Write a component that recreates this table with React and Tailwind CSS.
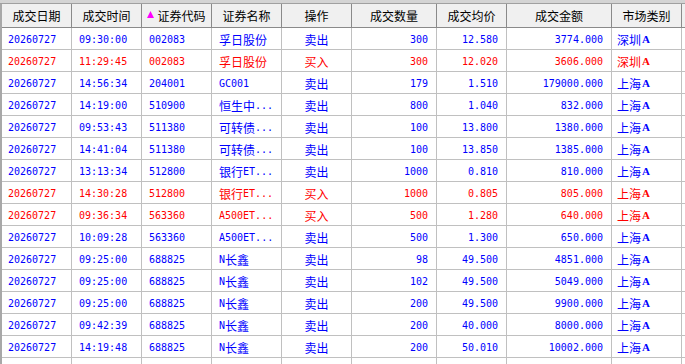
const cols = 'grid grid-cols-[70px_70px_70px_70px_70px_85px_70px_105px_70px]';

const rows = [
  ['20260727', '09:30:00', '002083', '孚日股份', '卖出', '300', '12.580', '3774.000', '深圳', 'b'],
  ['20260727', '11:29:45', '002083', '孚日股份', '买入', '300', '12.020', '3606.000', '深圳', 'r'],
  ['20260727', '14:56:34', '204001', 'GC001', '卖出', '179', '1.510', '179000.000', '上海', 'b'],
  ['20260727', '14:19:00', '510900', '恒生中...', '卖出', '800', '1.040', '832.000', '上海', 'b'],
  ['20260727', '09:53:43', '511380', '可转债...', '卖出', '100', '13.800', '1380.000', '上海', 'b'],
  ['20260727', '14:41:04', '511380', '可转债...', '卖出', '100', '13.850', '1385.000', '上海', 'b'],
  ['20260727', '13:13:34', '512800', '银行ET...', '卖出', '1000', '0.810', '810.000', '上海', 'b'],
  ['20260727', '14:30:28', '512800', '银行ET...', '买入', '1000', '0.805', '805.000', '上海', 'r'],
  ['20260727', '09:36:34', '563360', 'A500ET...', '买入', '500', '1.280', '640.000', '上海', 'r'],
  ['20260727', '10:09:28', '563360', 'A500ET...', '卖出', '500', '1.300', '650.000', '上海', 'b'],
  ['20260727', '09:25:00', '688825', 'N长鑫', '卖出', '98', '49.500', '4851.000', '上海', 'b'],
  ['20260727', '09:25:00', '688825', 'N长鑫', '卖出', '102', '49.500', '5049.000', '上海', 'b'],
  ['20260727', '09:25:00', '688825', 'N长鑫', '卖出', '200', '49.500', '9900.000', '上海', 'b'],
  ['20260727', '09:42:39', '688825', 'N长鑫', '卖出', '200', '40.000', '8000.000', '上海', 'b'],
  ['20260727', '14:19:48', '688825', 'N长鑫', '卖出', '200', '50.010', '10002.000', '上海', 'b'],
];

const headers = ['成交日期', '成交时间', '证券代码', '证券名称', '操作', '成交数量', '成交均价', '成交金额', '市场类别'];

const cjk = "font-['Noto_Sans_CJK_SC',sans-serif] text-[12px]";
const mono = "font-['DejaVu_Sans_Mono',monospace] text-[10px]";

function Mixed({ s }) {
  return s
    .split(/([\u4e00-\u9fff]+)/)
    .filter(Boolean)
    .map((p, i) =>
      /[\u4e00-\u9fff]/.test(p) ? (
        <span key={i} className={cjk}>{p}</span>
      ) : (
        <span key={i} className={mono}>{p}</span>
      )
    );
}

const cell = 'h-full border-r border-[#c0c0c0] flex items-center overflow-hidden whitespace-nowrap pt-[2px]';

function Row({ r }) {
  const color = r[9] === 'r' ? 'text-[#ff0000]' : 'text-[#0000ff]';
  return (
    <div className={`${cols} h-[22px] border-b border-[#c0c0c0] ${color} leading-none`}>
      <div className={`${cell} pl-[6px] ${mono}`}>{r[0]}</div>
      <div className={`${cell} pl-[7px] ${mono}`}>{r[1]}</div>
      <div className={`${cell} pl-[7px] ${mono}`}>{r[2]}</div>
      <div className={`${cell} pl-[7px]`}><Mixed s={r[3]} /></div>
      <div className={`${cell} justify-center ${cjk}`}>{r[4]}</div>
      <div className={`${cell} justify-end pr-[8px] ${mono}`}>{r[5]}</div>
      <div className={`${cell} justify-end pr-[8px] ${mono}`}>{r[6]}</div>
      <div className={`${cell} justify-end pr-[8px] ${mono}`}>{r[7]}</div>
      <div className={`${cell} pl-[5px]`}>
        <span className={cjk}>{r[8]}</span>
        <span className="font-['Liberation_Serif',serif] font-bold text-[11px] ml-[1px]">A</span>
      </div>
    </div>
  );
}

function EmptyRow() {
  return (
    <div className={`${cols} h-[22px] border-b border-[#c0c0c0]`}>
      {headers.map((h) => (
        <div key={h} className="h-full border-r border-[#c0c0c0]" />
      ))}
    </div>
  );
}

export default function App() {
  return (
    <div className="w-[685px] h-[364px] overflow-hidden bg-white flex flex-col">
      <div className="h-[4px] shrink-0 bg-[#d4d4d4] border-b border-[#a0a0a0]" />
      <div className="flex flex-1 min-h-0">
        <div className="w-[2px] shrink-0 bg-[#a8a8a8]" />
        <div className="flex-1 flex flex-col">
          <div className="h-[24px] shrink-0 bg-[#f0f0f0] border-b border-[#8a8a8a]">
            <div className={`${cols} h-full`}>
              {headers.map((h, i) => (
                <div
                  key={h}
                  className={`h-full border-r border-[#8a8a8a] flex items-center justify-center text-black ${cjk}`}
                >
                  {i === 2 && (
                    <svg width="7" height="7" viewBox="0 0 7 7" className="mr-[3px] mb-[2px]">
                      <polygon points="3.5,0 7,7 0,7" fill="#ff00ff" />
                    </svg>
                  )}
                  {h}
                </div>
              ))}
            </div>
          </div>
          <div className="flex flex-col">
            {rows.map((r, i) => (
              <Row key={i} r={r} />
            ))}
            <EmptyRow />
          </div>
        </div>
      </div>
    </div>
  );
}
